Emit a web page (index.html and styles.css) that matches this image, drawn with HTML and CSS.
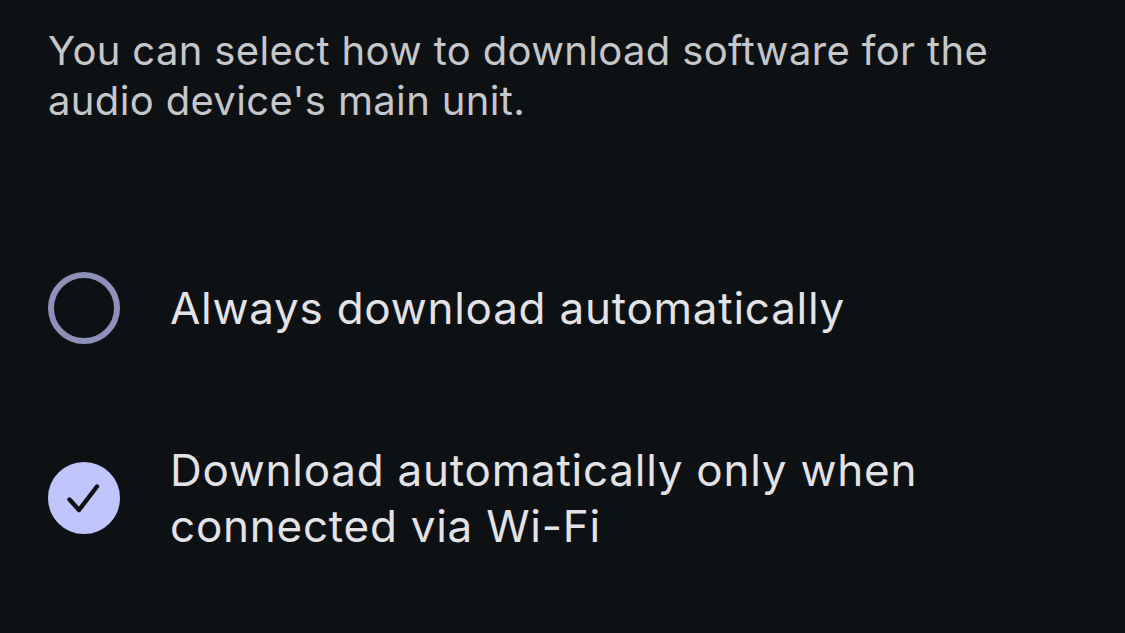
FILE: index.html
```html
<!DOCTYPE html>
<html lang="en">
<head>
    <meta charset="UTF-8">
    <meta name="viewport" content="width=device-width, initial-scale=1.0">
    <title>Software download</title>
    <link rel="stylesheet" href="styles.css">
</head>
<body>
    <div class="page">
        <p class="intro">You can select how to download software for the audio device's main unit.</p>

        <div class="opcoes">
            <div class="opcao">
                <span class="radio"></span>
                <span class="rotulo">Always download automatically</span>
            </div>
            <div class="opcao">
                <span class="radio marcado">
                    <svg class="check" width="40" height="40" viewBox="0 0 40 40">
                        <path d="M5.5 21.5 L15 32 L33 8.5" fill="none" stroke="#0e1113" stroke-width="4.4" stroke-linecap="round" stroke-linejoin="round"/>
                    </svg>
                </span>
                <span class="rotulo">Download automatically only when connected via Wi-Fi</span>
            </div>
        </div>
    </div>
</body>
</html>
```

FILE: styles.css
```css
* {
    padding: 0;
    margin: 0;
    box-sizing: border-box;
    font-family: 'Inter', 'Roboto', Arial, sans-serif;
}

body {
    background: #0e1113;
    width: 1125px;
    height: 633px;
    overflow: hidden;
}

.page {
    padding: 26px 48px 0 48px;
}

.intro {
    color: #c5c7ca;
    font-size: 40px;
    line-height: 50px;
    letter-spacing: 0.35px;
    width: 1000px;
}

.opcoes {
    margin-top: 146px;
    display: flex;
    flex-direction: column;
    gap: 98px;
}

.opcao {
    display: flex;
    align-items: center;
    gap: 50px;
}

.radio {
    flex: none;
    width: 72px;
    height: 72px;
    border-radius: 50%;
    border: 6px solid #8d91b9;
    display: flex;
    align-items: center;
    justify-content: center;
}

.radio.marcado {
    background: #c0c5fb;
    border-color: #c0c5fb;
}

.check {
    flex: none;
}

.rotulo {
    color: #e3e3e7;
    font-size: 44px;
    line-height: 56px;
    letter-spacing: 0.75px;
    width: 800px;
}
```
